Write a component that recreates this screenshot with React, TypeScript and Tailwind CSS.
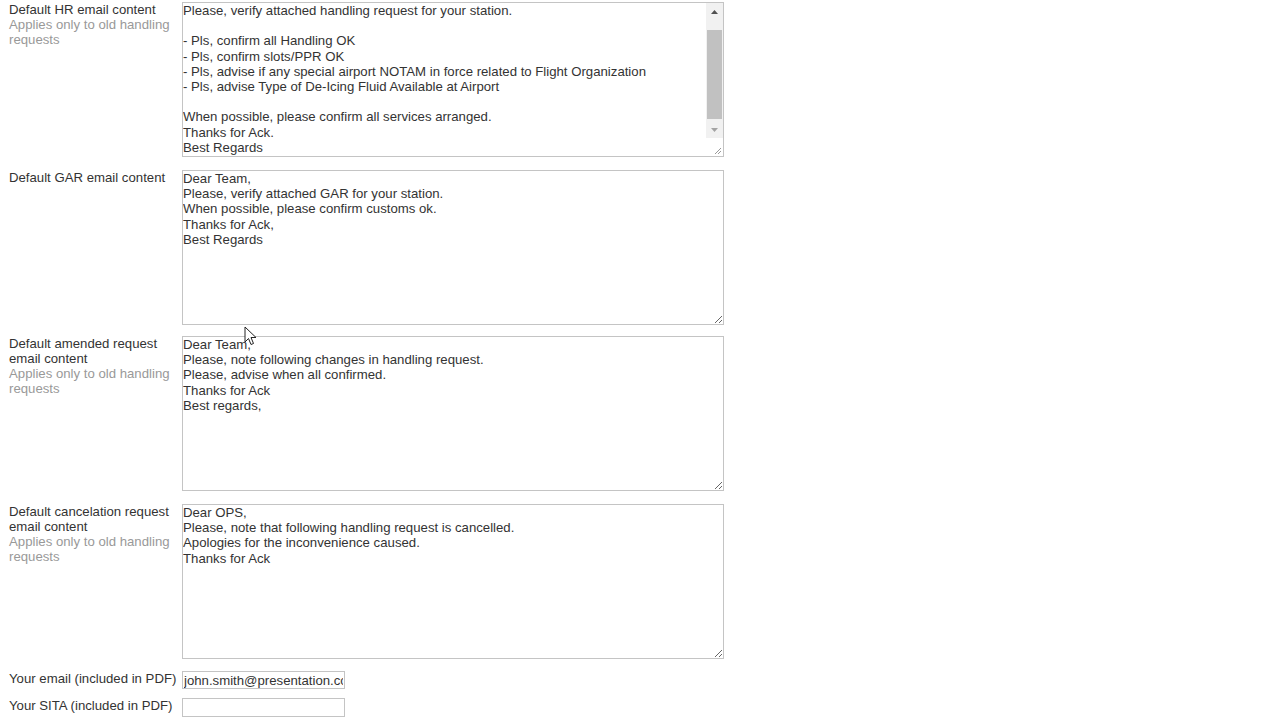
import React from "react";

const HR_TEXT = `Please, verify attached handling request for your station.

- Pls, confirm all Handling OK
- Pls, confirm slots/PPR OK
- Pls, advise if any special airport NOTAM in force related to Flight Organization
- Pls, advise Type of De-Icing Fluid Available at Airport

When possible, please confirm all services arranged.
Thanks for Ack.
Best Regards`;

const GAR_TEXT = `Dear Team,
Please, verify attached GAR for your station.
When possible, please confirm customs ok.
Thanks for Ack,
Best Regards`;

const AMENDED_TEXT = `Dear Team,
Please, note following changes in handling request.
Please, advise when all confirmed.
Thanks for Ack
Best regards,`;

const CANCEL_TEXT = `Dear OPS,
Please, note that following handling request is cancelled.
Apologies for the inconvenience caused.
Thanks for Ack`;

function Label({ title, note }: { title: string; note?: boolean }) {
  return (
    <div className="w-[173px] shrink-0 leading-[15px]">
      <div className="text-[#333]">{title}</div>
      {note && <div className="text-[#999]">Applies only to old handling requests</div>}
    </div>
  );
}

function Grip() {
  return (
    <svg width="9" height="9" viewBox="0 0 9 9" className="text-[#999]">
      <path d="M8 2 L2 8 M8 5 L5 8" stroke="currentColor" strokeWidth="1" />
    </svg>
  );
}

// first box shows a classic scrollbar, drawn by hand
function ScrollArea({ value }: { value: string }) {
  return (
    <div className="flex w-[542px] h-[155px] border border-[#c4c4c4] bg-white">
      <textarea
        readOnly
        value={value}
        className="flex-1 h-full resize-none overflow-hidden p-0 leading-[15.2px] text-[13.2px] text-[#333] outline-none font-['Liberation_Sans',Arial,sans-serif]"
      />
      <div className="w-[17px] flex flex-col bg-[#f1f1f1]">
        <div className="h-[18px] flex items-center justify-center">
          <svg width="7" height="4" viewBox="0 0 7 4">
            <path d="M0 4 L3.5 0 L7 4 Z" fill="#505050" />
          </svg>
        </div>
        <div className="flex-1 flex flex-col px-[1px]">
          <div className="h-[9px]" />
          <div className="h-[89px] bg-[#c1c1c1]" />
        </div>
        <div className="h-[16px] flex items-center justify-center">
          <svg width="7" height="4" viewBox="0 0 7 4">
            <path d="M0 0 L7 0 L3.5 4 Z" fill="#a3a3a3" />
          </svg>
        </div>
        <div className="h-[18px] bg-white flex items-end justify-end pr-px pb-px">
          <Grip />
        </div>
      </div>
    </div>
  );
}

function Area({ value }: { value: string }) {
  return (
    <textarea
      readOnly
      value={value}
      className="w-[542px] h-[155px] shrink-0 border border-[#c4c4c4] bg-white p-0 leading-[15.2px] text-[13.2px] text-[#333] outline-none overflow-hidden font-['Liberation_Sans',Arial,sans-serif]"
    />
  );
}

function Cursor() {
  return (
    <svg width="14" height="20" viewBox="0 0 14 20" className="absolute left-[244px] top-[326px]">
      <path
        d="M1 1 L1 16 L4.5 12.5 L7 18.5 L9.5 17.5 L7 11.5 L12 11.5 Z"
        fill="white"
        stroke="#222"
        strokeWidth="1"
        strokeLinejoin="round"
      />
    </svg>
  );
}

export default function App() {
  return (
    <div className="relative w-[1280px] h-[720px] bg-white overflow-hidden font-['Liberation_Sans',Arial,sans-serif] text-[13.2px] text-[#333]">
      <div className="flex flex-col pl-[9px] pt-[2px]">
        <div className="flex h-[168px]">
          <Label title="Default HR email content" note />
          <ScrollArea value={HR_TEXT} />
        </div>
        <div className="flex h-[166px]">
          <Label title="Default GAR email content" />
          <Area value={GAR_TEXT} />
        </div>
        <div className="flex h-[168px]">
          <Label title="Default amended request email content" note />
          <Area value={AMENDED_TEXT} />
        </div>
        <div className="flex h-[167px]">
          <Label title="Default cancelation request email content" note />
          <Area value={CANCEL_TEXT} />
        </div>
        <div className="flex h-[27px] items-start">
          <div className="w-[173px] shrink-0 leading-[15px] whitespace-nowrap">Your email (included in PDF)</div>
          <input
            readOnly
            value="john.smith@presentation.com"
            className="w-[163px] h-[18px] border border-[#c4c4c4] px-px text-[13.2px] leading-[15px] text-[#333] outline-none font-['Liberation_Sans',Arial,sans-serif]"
          />
        </div>
        <div className="flex h-[27px] items-start">
          <div className="w-[173px] shrink-0 leading-[15px] whitespace-nowrap">Your SITA (included in PDF)</div>
          <input
            readOnly
            value=""
            className="w-[163px] h-[19px] border border-[#c4c4c4] px-px text-[13.2px] outline-none"
          />
        </div>
      </div>
      <Cursor />
    </div>
  );
}
